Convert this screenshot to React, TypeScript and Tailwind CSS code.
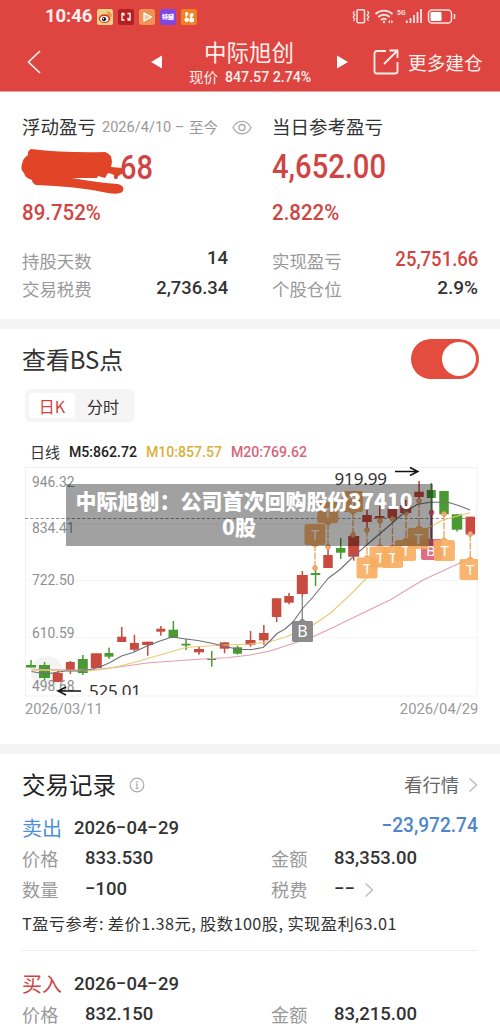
import { ReactNode } from "react"

// x, body top, body bottom, wick top, wick bottom, body width, rising
type Candle = [number, number, number, number, number, number, boolean]

const candles: Candle[] = [
    [31, 665, 667.5, 660, 667.5, 10, false],
    [44.5, 665, 678, 662, 680, 11, false],
    [57.7, 673, 682, 670, 682, 10, true],
    [70.3, 662, 670, 661, 674, 9, true],
    [82.8, 659, 673, 655, 675, 10, false],
    [96.3, 653.3, 668, 653.3, 668, 11, true],
    [109, 653, 656.7, 647.7, 659, 9, false],
    [121.7, 636.7, 642, 627, 642, 9, true],
    [134.4, 643, 649.7, 634.7, 651, 9, true],
    [147.7, 641.7, 645, 641.7, 655.7, 11, true],
    [160.8, 628.7, 631.7, 626, 635.7, 9, true],
    [173.3, 629.7, 638, 621, 638, 9.5, false],
    [186, 643.7, 645.5, 639, 650, 9, false],
    [199, 649, 652.3, 646.7, 654.7, 10, true],
    [211.7, 658.3, 660, 651, 666.7, 9, false],
    [224.5, 642.3, 648.7, 642.3, 653.3, 9.5, true],
    [237.5, 647.3, 653.7, 645.7, 654.7, 9, false],
    [250.5, 640, 644.7, 631, 646.7, 10, true],
    [263.8, 633, 640.3, 625, 644.7, 9.5, true],
    [276.6, 598.3, 617, 598.3, 622, 9.5, true],
    [289, 596, 602.7, 593, 604.3, 9.5, true],
    [302.3, 575, 594, 571, 596.7, 11, true],
    [315.5, 573, 575, 570, 586, 9.5, false],
    [328, 555, 568, 549, 568, 9.5, true],
    [340.7, 548, 552.7, 538, 559, 9.5, false],
    [353.7, 536, 556.7, 532, 560.7, 11, true],
    [367, 515, 522, 510, 531, 9.5, true],
    [379.7, 516, 518.3, 506, 521.7, 9.5, true],
    [392.3, 507.7, 518, 506, 520, 9.5, true],
    [405.7, 505, 513, 500, 514, 11, true],
    [419, 491.7, 497, 481, 501.7, 9.5, true],
    [431.3, 490, 498, 483, 512, 9, false],
    [444, 491, 514.3, 491, 514.3, 9.5, false],
    [457, 514.3, 529.7, 514.3, 531.5, 10.5, false],
    [470.3, 516.7, 534.5, 516.7, 534.5, 9.5, true],
]

// marker left, top, candle x, candle y
const trades = [
    [304.5, 524, 315, 568],
    [317.3, 502, 328, 547],
    [342, 491, 353, 535],
    [356.5, 557.5, 367, 530],
    [369.5, 546.5, 380, 521],
    [382, 547, 392.5, 519],
    [395, 540, 406, 513],
    [407.7, 528, 419, 501],
    [433.9, 540, 444, 514],
    [459.5, 559, 470.3, 534],
]

const axis = [
    { label: "946.32", y: 487 },
    { label: "834.41", y: 532.7 },
    { label: "722.50", y: 584.5 },
    { label: "610.59", y: 637.5 },
    { label: "498.68", y: 690.5 },
]

const ma5 = "M31.5 671.5 L46 674 L65 671 L80 671 L90 669.5 L100 667 L110 662.5 L121.5 656 L133 652.5 L147 646 L160 641 L172 637 L186 639 L198 640.5 L213 643.5 L227 647 L240 649.5 L252 649.5 L263 647.5 L270 641 L277 633.5 L285 629 L293 622 L303 608 L313 597 L328 578.5 L340 569.5 L353 557 L373 539.5 L390 525 L403 513.5 L417 504.5 L430 502.3 L448 502.3 L460 506 L470 510"
const ma10 = "M31.5 670L67 670.7L90 670.7L107 668.7L120 666L140 660.7L160 655L186 647.5L207 646L227 645L250 644L270 641.7L287 636.5L313 625L330 613.5L350 595L373 571.5L390 555L410 538.5L427 528.5L443 520L470 512.7"
const ma20 = "M31.5 669.3L67 670L93 669.7L117 667.3L147 663L177 660.7L207 658.7L227 657.7L250 655L270 651L293 643.5L313 636.7L333 627.5L367 611L390 600L423 580L450 567.5L472 557.5"

function Chart() {
    return (
        <svg viewBox="24 466 454 231" className="block h-[231px] w-[454px] font-[Roboto,sans-serif]">
            <g stroke="#f1f1f1" strokeWidth="1" fill="none">
                <rect x="25.5" y="467.5" width="451.5" height="228.5" />
                <path d="M25 523.5H477M25 580.5H477M25 637.5H477" stroke="#f6f6f6" />
            </g>
            <path d="M25 518.5H477" stroke="#888" strokeWidth="0.9" strokeDasharray="3.2 2" />
            <circle cx="47" cy="672" r="16" fill="#999" opacity="0.12" />
            {candles.map(([x, top, bottom, high, low, w, up]) => (
                <g key={x} fill={up ? "#c94b40" : "#4a9a33"}>
                    <rect x={x - 0.7} y={high} width="1.5" height={low - high} />
                    <rect x={x - w / 2} y={top} width={w} height={bottom - top} />
                </g>
            ))}
            <path d="M302.3 596V622" stroke="#85868c" strokeWidth="1.3" />
            <path d="M431.3 512V540" stroke="#86506b" strokeWidth="2" />
            <circle cx="431.6" cy="512.5" r="2.8" fill="#d9637d" />
            <g fill="#8f8f8f" fontSize="15">
                {axis.map(({ label, y }) => (
                    <text key={label} x="32" y={y} textLength="42.5" lengthAdjust="spacingAndGlyphs">{label}</text>
                ))}
            </g>
            <g fill="none" strokeWidth="1.1" strokeLinejoin="round">
                <path d={ma20} stroke="#e3a0ac" />
                <path d={ma10} stroke="#e9cb72" />
            </g>
            <g textAnchor="middle" fontSize="15" fill="#fff" className="font-['Noto_Sans',sans-serif]">
                <rect x="421" y="539" width="21" height="21" rx="2" fill="#e16e80" />
                <text x="431" y="556">B</text>
                {trades.map(([left, top, x, y]) => (
                    <g key={left}>
                        <path d={`M${x} ${y}V${y < top ? top : top + 21}`} stroke="#eca35d" strokeWidth="1.3" strokeDasharray="7 1.5" />
                        <circle cx={x} cy={y} r="2.4" fill="#efae76" stroke="#e58f55" strokeWidth="0.8" />
                        <path d={y < top ? `M${x - 4} ${top}l4 -3 4 3z` : `M${x - 4} ${top + 21}l4 3 4 -3z`} fill="#f4ad63" />
                        <rect x={left} y={top} width="21" height="21" rx="2" fill="#f6ad61" fillOpacity="0.9" />
                        <text x={left + 10.7} y={top + 16}>T</text>
                    </g>
                ))}
                <path d="M299 621l3.3 -3 3.3 3z" fill="#8b8b8b" />
                <rect x="292" y="621" width="21" height="21" rx="1.5" fill="#8b8b8b" />
                <text x="302.5" y="637" fontSize="16">B</text>
            </g>
            <path d={ma5} fill="none" stroke="#6f7078" strokeWidth="1.1" strokeLinejoin="round" />
            <g fill="#333" fontSize="17" className="font-['Noto_Sans',sans-serif]">
                <text x="334.5" y="485" textLength="52.5">919.99</text>
                <svg x="80" y="680" width="70" height="15" viewBox="80 680 70 15">
                    <text x="89" y="696.5" textLength="52">525.01</text>
                </svg>
            </g>
            <g fill="none" stroke="#111" strokeWidth="1.4">
                <path d="M395 471.5H418M410 467.5L418 471.5L410 475.5" />
                <path d="M81 691H58M66 687L58 691L66 695" />
            </g>
        </svg>
    )
}

interface NumProps {
    className: string
    children: ReactNode
}

// hyphens are widened and raised to the middle of the digits
function Num({ className, children }: NumProps) {
    const parts = typeof children === "string" ? children.split("-") : [children]
    return (
        <span className={`inline-block whitespace-nowrap font-[Roboto,sans-serif] font-medium ${className}`}>
            {parts.map((part, i) => (
                <span key={i}>
                    {i > 0 && <span className="inline-block w-[0.56em] -translate-y-px scale-x-[1.6] text-center">-</span>}
                    {part}
                </span>
            ))}
        </span>
    )
}

function ChevronRight() {
    return (
        <svg viewBox="0 0 10 16" className="h-4 w-[10px]" fill="none" stroke="#bdbdbd" strokeWidth="1.5">
            <path d="M1.5 1.5L8.5 8L1.5 14.5" />
        </svg>
    )
}

function StatusBar() {
    return (
        <div className="flex h-[33px] items-center justify-between pl-[45px] pr-[44px]">
            <div className="flex items-center gap-[5px]">
                <span className="mr-px w-[46px] whitespace-nowrap font-[Roboto,sans-serif] text-[18.5px] font-bold leading-none tracking-[-0.1px] text-[#ffefed]">10:46</span>
                <svg viewBox="0 0 16 16" className="size-4">
                    <rect width="16" height="16" rx="2.5" fill="#f3d287" />
                    <ellipse cx="7.5" cy="9.6" rx="5.8" ry="4.3" fill="#d5382b" />
                    <ellipse cx="7.3" cy="10" rx="4.2" ry="3" fill="#fff" />
                    <circle cx="7" cy="10.2" r="2.1" fill="#222" />
                    <circle cx="6.3" cy="9.8" r="0.7" fill="#fff" />
                    <path d="M10 3.2a4 4 0 0 1 4 4.5M10.3 5.3a2 2 0 0 1 1.7 2" stroke="#e07328" strokeWidth="1.2" fill="none" />
                </svg>
                <svg viewBox="0 0 16 16" className="size-4">
                    <rect width="16" height="16" rx="2.5" fill="#b3201f" />
                    <path d="M6.5 4.5H4v6.5h2.5M9.5 4.5H12v6.5H9.5M4.5 4.5l2 2M11.5 11l-2 -2" stroke="#fff" strokeWidth="1.3" fill="none" />
                </svg>
                <svg viewBox="0 0 16 16" className="size-4">
                    <rect width="16" height="16" rx="3" fill="#ef9354" />
                    <path d="M5 4L12.5 8L5 12z" fill="#f5c59a" stroke="#fff" strokeWidth="1.3" strokeLinejoin="round" />
                </svg>
                <span className="flex size-4 items-center justify-center rounded-[3px] bg-[#7d47e6]">
                    <span className="whitespace-nowrap text-[6px] font-black leading-none text-white">特睇</span>
                </span>
                <svg viewBox="0 0 16 16" className="size-4">
                    <rect width="16" height="16" rx="2" fill="#f08224" />
                    <path d="M4 4.5c0-2 3.5-2 3.5 0.5L5 9zM8.5 7c0-3 3.5-4 4-2s-1 3-3 4z" fill="#fff" />
                    <circle cx="5.7" cy="10.7" r="2.3" fill="#fff" />
                    <circle cx="10.7" cy="11" r="2.5" fill="#fff" />
                </svg>
            </div>
            <svg viewBox="351 7 105 19" className="h-[19px] w-[105px]" fill="none" stroke="#ffe3e0" strokeWidth="1.5">
                <rect x="357" y="9.8" width="7.5" height="13" rx="1" />
                <path d="M354.5 11l-1.3 2 1.5 2-1.5 2 1.5 2-1.3 2M367.5 11l1.3 2-1.5 2 1.5 2-1.5 2 1.3 2" strokeWidth="1.3" />
                <path d="M375.5 14a12.5 12.5 0 0 1 17 0M378.2 17a8.5 8.5 0 0 1 11.6 0M381 20a4.6 4.6 0 0 1 5.5 -0.5" strokeWidth="1.9" />
                <circle cx="384" cy="22" r="1.2" fill="#ffe3e0" stroke="none" />
                <path d="M390 20l-2 1.8 2 1.7zM391.3 20l2 1.8-2 1.7z" fill="#ffe3e0" stroke="none" />
                <text x="397" y="15" fontSize="8" fontWeight="700" textLength="8.5" lengthAdjust="spacingAndGlyphs" fill="#ffe3e0" stroke="none" className="font-[Roboto,sans-serif]">5G</text>
                <path d="M406.8 20.5v2.5M410.5 18v5M414 15v8M417.5 12v11M421 9v14" strokeWidth="1.8" />
                <rect x="428.5" y="10" width="23" height="13" rx="3.5" />
                <rect x="430.5" y="12" width="11" height="9" rx="1" fill="#fff" stroke="none" />
                <path d="M454.5 14v5" />
            </svg>
        </div>
    )
}

function Header() {
    return (
        <header className="h-[92px] border-b border-[#eda19e] bg-[#de4440] text-[#fff0ee]">
            <StatusBar />
            <div className="flex h-[58px] items-center">
                <svg viewBox="0 0 14 24" className="ml-[27px] h-6 w-[14px]" fill="none" stroke="currentColor" strokeWidth="1.7">
                    <path d="M13 1L1.5 12L13 23" />
                </svg>
                <svg viewBox="0 0 11 14" className="ml-[110px] h-[14px] w-[11px]" fill="#fff">
                    <path d="M11 0.5V13.5L0 7z" />
                </svg>
                <div className="ml-[27px] flex w-[122px] flex-col items-center">
                    <h1 className="-mt-[5px] mr-[2px] h-[34px] whitespace-nowrap text-[22.5px] leading-[36px]">中际旭创</h1>
                    <p className="flex h-5 items-center whitespace-nowrap text-[14.5px] leading-5">
                        现价
                        <Num className="ml-[7px] w-[86px] origin-left scale-x-[0.945] text-[15px]">847.57 2.74%</Num>
                    </p>
                </div>
                <svg viewBox="0 0 11 14" className="ml-[26px] h-[14px] w-[11px]" fill="#fff">
                    <path d="M0 0.5V13.5L11 7z" />
                </svg>
                <svg viewBox="0 0 26 26" className="ml-[25px] size-[26px]" fill="none" stroke="currentColor" strokeWidth="1.8">
                    <path d="M13 2H4a2.5 2.5 0 0 0-2.5 2.5V22A2.5 2.5 0 0 0 4 24.5H22A2.5 2.5 0 0 0 24.5 22V13M11 15L24 2M16.5 1.5H24.5V9" />
                </svg>
                <span className="ml-[9px] whitespace-nowrap text-[18.7px]">更多建仓</span>
            </div>
        </header>
    )
}

interface StatProps {
    label: string
    children: ReactNode
}

function Stat({ label, children }: StatProps) {
    return (
        <div className="flex h-[28.5px] items-center justify-between text-[17.4px] text-[#999]">
            <span className="mt-px">{label}</span>
            {children}
        </div>
    )
}

function Summary() {
    return (
        <section className="grid h-[227px] grid-cols-[206px_206px] gap-x-[44px] px-[22px] pt-[20px]">
            <div>
                <div className="flex h-[30px] items-center whitespace-nowrap text-[18.5px] text-[#333]">
                    <span className="shrink-0">浮动盈亏</span>
                    <span className="ml-[6px] flex w-[127px] shrink-0 items-center text-[14.5px] text-[#999]">
                        <Num className="w-[87px] origin-left scale-x-[0.97] text-[15px] !font-normal">2026/4/10 –</Num>至今
                    </span>
                    <svg viewBox="0 0 20 15" className="ml-[3px] h-[15px] w-5 shrink-0" fill="none" stroke="#aaa" strokeWidth="1.3">
                        <path d="M1 7.5C5 -0.8 15 -0.8 19 7.5C15 15.8 5 15.8 1 7.5z" />
                        <circle cx="10" cy="7.5" r="3" />
                    </svg>
                </div>
                <div className="flex h-[50px] items-center text-[#cf4543]">
                    <svg viewBox="21 143 104 50" className="relative z-10 -ml-px h-[50px] w-[104px] shrink-0 overflow-visible" fill="#e14427">
                        <path d="M31 150Q65 154 105 153Q112 155 112 163L111 168L122 169L123 174L117 178L112 175L108 174L105 179L98 177L97 179L72 179Q100 184 118 185Q125 187 123 192Q120 196 108 194Q75 187 36 186Q32 184 32 181Q25 179 24 174Q20 170 22 165Q23 159 28 156Q27 152 31 150z" />
                    </svg>
                    <Num className="-ml-[13px] mt-px origin-left scale-x-[0.88] text-[33px]">.68</Num>
                </div>
                <div className="flex h-10 items-center text-[#cf4543]">
                    <Num className="origin-left scale-x-[0.93] text-[22px]">89.752%</Num>
                </div>
                <div className="mt-[14px]">
                    <Stat label="持股天数">
                        <Num className="-mt-[2px] text-[18.5px] text-[#333]">14</Num>
                    </Stat>
                    <Stat label="交易税费">
                        <Num className="-mt-[2px] origin-right scale-x-[0.97] text-[19px] text-[#333]">2,736.34</Num>
                    </Stat>
                </div>
            </div>
            <div>
                <div className="flex h-[30px] items-center whitespace-nowrap text-[18.5px] text-[#333]">当日参考盈亏</div>
                <div className="flex h-[50px] items-center text-[#cf4543]">
                    <Num className="mt-px origin-left scale-x-[0.87] text-[33.5px]">4,652.00</Num>
                </div>
                <div className="flex h-10 items-center text-[#cf4543]">
                    <Num className="origin-left scale-x-[0.93] text-[22px]">2.822%</Num>
                </div>
                <div className="mt-[14px]">
                    <Stat label="实现盈亏">
                        <Num className="-mt-[2px] origin-right scale-x-[0.95] text-[19.5px] text-[#cf4543]">25,751.66</Num>
                    </Stat>
                    <Stat label="个股仓位">
                        <Num className="-mt-[2px] origin-right text-[19px] text-[#333]">2.9%</Num>
                    </Stat>
                </div>
            </div>
        </section>
    )
}

function TradePoints() {
    return (
        <section className="h-[415px] pt-[10px]">
            <div className="flex h-10 items-center justify-between pl-[22px] pr-[21px]">
                <h2 className="text-[23.9px] text-[#333]">查看BS点</h2>
                <button role="switch" aria-checked="true" aria-label="查看BS点" className="flex h-10 w-[68px] items-center justify-end rounded-full bg-[#e34d3e] pr-[3px]">
                    <span className="size-[34px] rounded-full bg-white" />
                </button>
            </div>
            <div className="ml-[25px] mt-[10px] flex h-[33px] w-[110px] items-center rounded-md bg-[#f5f5f5] px-1 text-[16px] leading-none">
                <span className="flex h-[25px] w-[46px] items-center justify-center rounded bg-white text-[#cf4543]">日K</span>
                <span className="ml-[12px] text-[#333]">分时</span>
            </div>
            <div className="ml-[30px] mt-[19px] flex h-[22px] items-center whitespace-nowrap text-[15px] text-[#333]">
                日线
                <Num className="ml-[9px] w-[77px] origin-left scale-x-[0.94] text-[15px] text-[#222]">M5:862.72</Num>
                <Num className="w-[85px] origin-left scale-x-[0.94] text-[15px] text-[#d9b13a]">M10:857.57</Num>
                <Num className="origin-left scale-x-[0.94] text-[15px] text-[#d4667c]">M20:769.62</Num>
            </div>
            <div className="relative ml-6 mt-[3px] w-[454px]">
                <Chart />
                <div className="absolute left-[42px] top-[18px] h-[62px] w-[367px] bg-black/[0.37] pr-[11px] pt-[3px] text-center text-[21px] font-black leading-[26px] text-white">
                    中际旭创：公司首次回购股份37410
                    <br />
                    <span className="mr-[10px]">0股</span>
                </div>
            </div>
            <div className="ml-[25px] flex h-[24px] w-[453px] items-center justify-between text-[#999]">
                <Num className="origin-left scale-x-[0.955] text-[15.3px] !font-normal">2026/03/11</Num>
                <Num className="origin-right scale-x-[0.965] text-[15.3px] !font-normal">2026/04/29</Num>
            </div>
        </section>
    )
}

interface FieldProps {
    label: string
    value: string
    more?: boolean
}

function Field({ label, value, more }: FieldProps) {
    return (
        <div className="flex items-center">
            <span className="w-[63px] whitespace-nowrap text-[18.2px] text-[#999]">{label}</span>
            <Num className="origin-left scale-x-[0.975] text-[19px] text-[#333]">{value}</Num>
            {more && <span className="ml-[9px]"><ChevronRight /></span>}
        </div>
    )
}

interface RecordProps {
    side: string
    sideClass: string
    amount?: string
    children: ReactNode
}

function Record({ side, sideClass, amount, children }: RecordProps) {
    return (
        <div>
            <div className="flex h-[30px] items-center">
                <span className={`w-[52px] whitespace-nowrap text-[20px] ${sideClass}`}>{side}</span>
                <Num className="origin-left scale-x-[0.975] text-[19px] text-[#333]">2026-04-29</Num>
                {amount && <Num className="-mt-[6px] ml-auto origin-right scale-x-[0.955] text-[20px] text-[#4d86cc]">{amount}</Num>}
            </div>
            <div className="grid auto-rows-[31px] grid-cols-[249px_1fr]">{children}</div>
        </div>
    )
}

function Records() {
    return (
        <section className="h-[277px] overflow-hidden px-[22px] pt-[16px]">
            <div className="flex h-[30px] items-center text-[23.5px] text-[#222]">
                交易记录
                <svg viewBox="0 0 16 16" className="ml-[13px] size-4" fill="none" stroke="#aaa" strokeWidth="1.2">
                    <circle cx="8" cy="8" r="6.8" />
                    <path d="M8 4v1.7M6.8 7H8v4.5M6.5 11.5h3" />
                </svg>
                <span className="ml-auto mr-[9px] text-[18.3px] text-[#666]">看行情</span>
                <ChevronRight />
            </div>
            <div className="mt-[13px]">
                <Record side="卖出" sideClass="text-[#4d8fd6]" amount="-23,972.74">
                    <Field label="价格" value="833.530" />
                    <Field label="金额" value="83,353.00" />
                    <Field label="数量" value="-100" />
                    <Field label="税费" value="--" more />
                </Record>
            </div>
            <p className="mt-[7px] flex h-[22px] items-center whitespace-nowrap text-[16.3px] tracking-[0.4px] text-[#333]">T盈亏参考: 差价1.38元, 股数100股, 实现盈利63.01</p>
            <hr className="mb-[18px] mt-[16px] border-[#eee]" />
            <Record side="买入" sideClass="text-[#cf4543]">
                <Field label="价格" value="832.150" />
                <Field label="金额" value="83,215.00" />
            </Record>
        </section>
    )
}

export default function App() {
    return (
        <main className="h-[1031px] w-[500px] overflow-hidden bg-white font-['Noto_Sans_CJK_SC',sans-serif]">
            <Header />
            <Summary />
            <div className="h-[10px] bg-[#f4f4f4]" />
            <TradePoints />
            <div className="h-[10px] bg-[#f4f4f4]" />
            <Records />
        </main>
    )
}
